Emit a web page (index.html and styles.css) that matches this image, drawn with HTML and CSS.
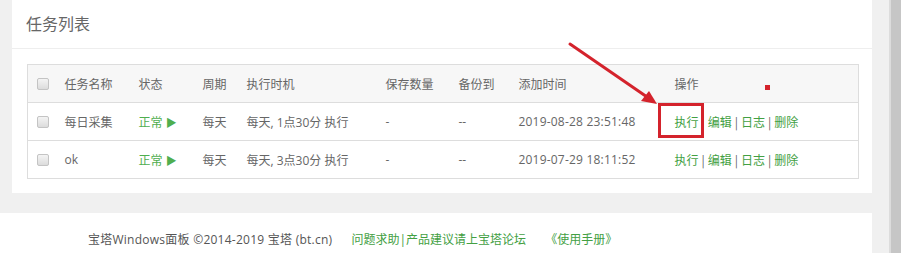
FILE: index.html
```html
<!DOCTYPE html>
<html lang="zh-CN">
<head>
<meta charset="utf-8">
<title>任务列表</title>
<link rel="stylesheet" href="styles.css">
</head>
<body>
<div class="main">
  <div class="content">
    <div class="card">
      <div class="card-title">任务列表</div>
      <div class="card-body">
        <table class="grid">
          <colgroup>
            <col class="c-chk"><col class="c-name"><col class="c-state"><col class="c-cycle"><col class="c-when"><col class="c-keep"><col class="c-backup"><col class="c-added"><col class="c-ops">
          </colgroup>
          <thead>
            <tr>
              <th><span class="chk"></span></th>
              <th>任务名称</th>
              <th>状态</th>
              <th>周期</th>
              <th>执行时机</th>
              <th>保存数量</th>
              <th>备份到</th>
              <th>添加时间</th>
              <th>操作</th>
            </tr>
          </thead>
          <tbody>
            <tr>
              <td><span class="chk"></span></td>
              <td>每日采集</td>
              <td><span class="ok">正常 <span class="play">▶</span></span></td>
              <td>每天</td>
              <td>每天, 1点30分 执行</td>
              <td>-</td>
              <td>--</td>
              <td class="time">2019-08-28 23:51:48</td>
              <td class="ops"><a>执行</a><span class="sep">|</span><a>编辑</a><span class="sep">|</span><a>日志</a><span class="sep">|</span><a>删除</a></td>
            </tr>
            <tr>
              <td><span class="chk"></span></td>
              <td>ok</td>
              <td><span class="ok">正常 <span class="play">▶</span></span></td>
              <td>每天</td>
              <td>每天, 3点30分 执行</td>
              <td>-</td>
              <td>--</td>
              <td class="time">2019-07-29 18:11:52</td>
              <td class="ops"><a>执行</a><span class="sep">|</span><a>编辑</a><span class="sep">|</span><a>日志</a><span class="sep">|</span><a>删除</a></td>
            </tr>
          </tbody>
        </table>
      </div>
    </div>
  </div>
  <div class="footer">
    <span class="copy">宝塔Windows面板 ©2014-2019 宝塔 (bt.cn)</span>
    <a class="flink">问题求助|产品建议请上宝塔论坛</a>
    <a class="flink">《使用手册》</a>
  </div>
</div>
<div class="scrollbar"></div>
<svg class="annot" width="901" height="253" viewBox="0 0 901 253">
  <line x1="570" y1="44" x2="650" y2="99" stroke="#d4232c" stroke-width="3" stroke-linecap="round"/>
  <polygon points="657,104 641,101 649,91" fill="#d4232c"/>
  <rect x="659.5" y="104.5" width="43" height="32" fill="none" stroke="#d4232c" stroke-width="3"/>
  <rect x="765" y="85" width="5" height="5" fill="#d4232c"/>
</svg>
</body>
</html>
```

FILE: styles.css
```css
* { box-sizing: border-box; }
html, body { margin: 0; padding: 0; }
body {
  width: 901px;
  height: 253px;
  overflow: hidden;
  background: #f0f0f0;
  display: flex;
  font-family: "Open Sans", "Noto Sans CJK SC", sans-serif;
  font-size: 12px;
  color: #666;
  position: relative;
}
.main {
  width: 889px;
  display: flex;
  flex-direction: column;
}
.content {
  padding-left: 12px;
  padding-right: 17px;
}
.card {
  background: #fff;
  height: 193px;
}
.card-title {
  height: 49px;
  line-height: 48px;
  padding-left: 14px;
  font-size: 16px;
  color: #666;
  border-bottom: 1px solid #eeeeee;
}
.card-body {
  padding: 15px 14px 14px 15px;
}
.grid {
  width: 831px;
  border-collapse: collapse;
  table-layout: fixed;
  border: 1px solid #dddddd;
}
.c-chk { width: 28px; }
.c-name { width: 74px; }
.c-state { width: 64px; }
.c-cycle { width: 44px; }
.c-when { width: 139px; }
.c-keep { width: 73px; }
.c-backup { width: 60px; }
.c-added { width: 156px; }
.c-ops { width: 193px; }
.grid th, .grid td {
  height: 38px;
  padding: 0 0 0 9px;
  text-align: left;
  font-weight: normal;
  white-space: nowrap;
  color: #666;
}
.grid thead tr { background: #f7f7f7; }
.grid tr { border-bottom: 1px solid #dddddd; }
.chk {
  display: inline-block;
  width: 12px;
  height: 12px;
  border: 1px solid #c4c4c4;
  border-radius: 2px;
  background: linear-gradient(#f4f4f4, #dcdcdc);
  vertical-align: middle;
  margin-top: -2px;
}
.ok { color: #4fae4f; }
.play { font-family: "Noto Sans CJK SC", sans-serif; font-size: 11px; }
.grid td.time { letter-spacing: 0.2px; }
.ops { font-family: "Noto Sans CJK SC", sans-serif; }
.ops a { color: #43a043; }
.sep { margin: 0 3px; color: #666; }
.footer {
  margin-top: 20px;
  margin-right: 17px;
  flex: 1;
  background: #fff;
  padding: 18px 0 0 88px;
  line-height: 18px;
  color: #555;
}
.copy { letter-spacing: 0.25px; }
.flink { color: #43a043; margin-left: 16px; }
.scrollbar {
  width: 12px;
  background: #c6c6c6;
  border-left: 2px solid #dcdcdc;
}
.annot {
  position: absolute;
  left: 0;
  top: 0;
  pointer-events: none;
}
```
